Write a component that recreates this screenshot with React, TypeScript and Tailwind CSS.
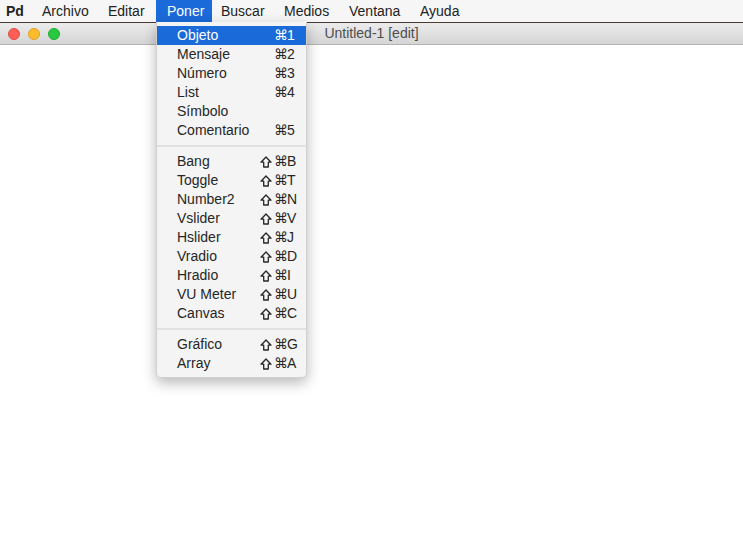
import React from "react";

type Item = { label: string; shift?: boolean; key?: string } | "sep";

const items: Item[] = [
  { label: "Objeto", key: "1" },
  { label: "Mensaje", key: "2" },
  { label: "Número", key: "3" },
  { label: "List", key: "4" },
  { label: "Símbolo" },
  { label: "Comentario", key: "5" },
  "sep",
  { label: "Bang", shift: true, key: "B" },
  { label: "Toggle", shift: true, key: "T" },
  { label: "Number2", shift: true, key: "N" },
  { label: "Vslider", shift: true, key: "V" },
  { label: "Hslider", shift: true, key: "J" },
  { label: "Vradio", shift: true, key: "D" },
  { label: "Hradio", shift: true, key: "I" },
  { label: "VU Meter", shift: true, key: "U" },
  { label: "Canvas", shift: true, key: "C" },
  "sep",
  { label: "Gráfico", shift: true, key: "G" },
  { label: "Array", shift: true, key: "A" },
];

const menus: { name: string; w: string; pl: string }[] = [
  { name: "Archivo", w: "w-[66px]", pl: "pl-[11px]" },
  { name: "Editar", w: "w-[59px]", pl: "pl-[11px]" },
  { name: "Poner", w: "w-[56px]", pl: "pl-[11px]" },
  { name: "Buscar", w: "w-[61px]", pl: "pl-[9px]" },
  { name: "Medios", w: "w-[65px]", pl: "pl-[11px]" },
  { name: "Ventana", w: "w-[71px]", pl: "pl-[11px]" },
  { name: "Ayuda", w: "w-[60px]", pl: "pl-[11px]" },
];

function ShiftIcon({ color }: { color: string }) {
  return (
    <svg width="12" height="12" viewBox="0 0 12 12" className="block">
      <path
        d="M6 1 L11 6.2 L8.3 6.2 L8.3 11 L3.7 11 L3.7 6.2 L1 6.2 Z"
        fill="none"
        stroke={color}
        strokeWidth="1.3"
        strokeLinejoin="round"
      />
    </svg>
  );
}

export default function App() {
  return (
    <div
      className="relative w-[743px] h-[555px] bg-white overflow-hidden text-[#222]"
      style={{ fontFamily: '"Liberation Sans", "DejaVu Sans", sans-serif' }}
    >
      {/* menu bar */}
      <div className="h-[22px] bg-[#f6f6f6] flex items-center text-[14px]">
        <div className="w-[31px] pl-[6px] font-bold leading-[22px]">Pd</div>
        {menus.map((m) => (
          <div
            key={m.name}
            className={
              m.w +
              " " +
              m.pl +
              (m.name === "Poner"
                ? " leading-[22px] bg-[#1b6ad9] text-white"
                : " leading-[22px]")
            }
          >
            {m.name}
          </div>
        ))}
      </div>
      <div className="h-[1px] bg-[#4a3d30]" />
      {/* window title bar */}
      <div className="relative h-[22px] bg-gradient-to-b from-[#ececec] to-[#d5d5d5] border-b border-[#b3b3b3] flex items-center">
        <div className="flex items-center gap-[8px] pl-[8px]">
          <div className="w-[12px] h-[12px] rounded-full bg-[#fc5f57] border border-[#e24b41]" />
          <div className="w-[12px] h-[12px] rounded-full bg-[#fdbc2e] border border-[#e0a123]" />
          <div className="w-[12px] h-[12px] rounded-full bg-[#28c840] border border-[#1fab2f]" />
        </div>
        <div className="absolute inset-0 flex items-center justify-center text-[14px] text-[#4d4d4d]">
          Untitled-1 [edit]
        </div>
      </div>

      {/* dropdown menu */}
      <div className="absolute left-[156px] top-[22px] w-[151px] bg-[#f4f4f4] rounded-b-[5px] border border-t-0 border-[#d0d0d0] shadow-[0_5px_14px_rgba(0,0,0,0.28)] py-[4px] text-[14px] text-[#262626]">
        {items.map((it, i) =>
          it === "sep" ? (
            <div key={i} className="h-[12px] flex items-center">
              <div className="w-full h-[2px] bg-[#e2e2e2]" />
            </div>
          ) : (
            <div
              key={i}
              className={
                "h-[19px] flex items-center " +
                (i === 0 ? "bg-[#1b6ad9] text-white" : "")
              }
            >
              <div className="pl-[20px] flex-1 leading-[19px]">{it.label}</div>
              {it.key && (
                <div className="flex items-center leading-[19px]">
                  <span className="w-[14px] flex items-center">
                    {it.shift ? <ShiftIcon color={i === 0 ? "#fff" : "#262626"} /> : null}
                  </span>
                  <span
                    className="w-[13px] text-[14px]"
                    style={{ fontFamily: '"DejaVu Sans", sans-serif' }}
                  >
                    ⌘
                  </span>
                  <span className="w-[19px] text-[14px]">{it.key}</span>
                </div>
              )}
            </div>
          )
        )}
      </div>
    </div>
  );
}
